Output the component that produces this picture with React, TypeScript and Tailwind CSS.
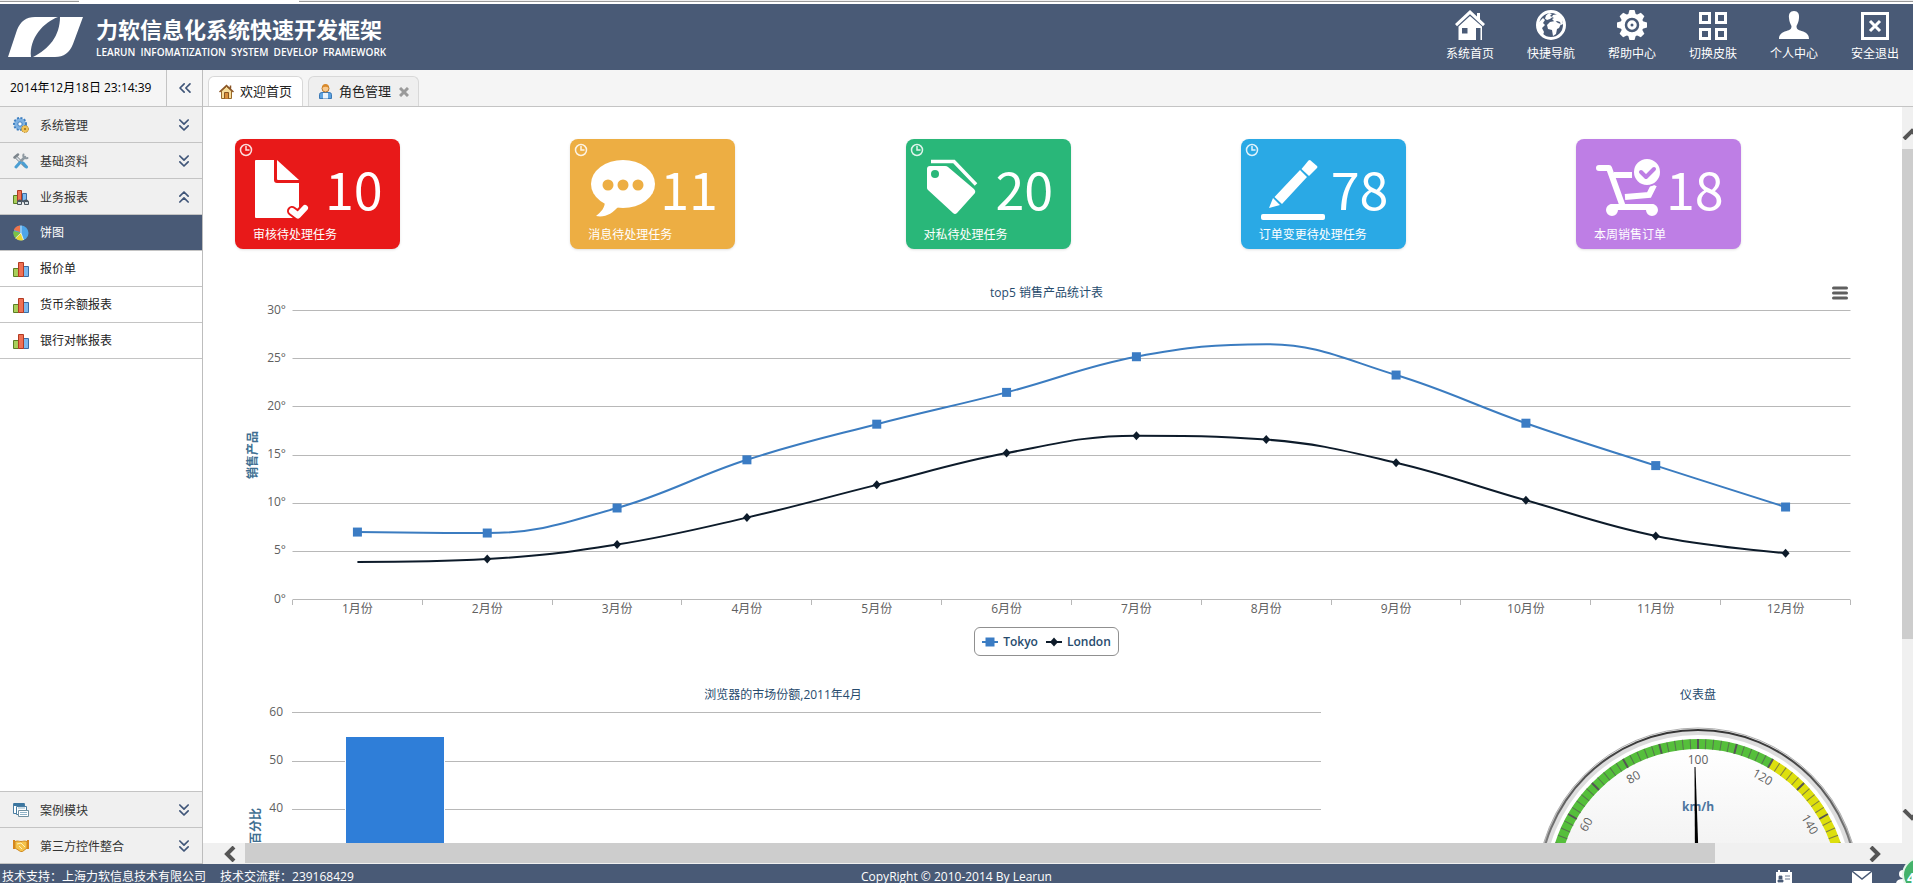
import type { ReactNode } from "react"
import { ChevronsDown, ChevronsLeft, ChevronsUp } from "lucide-react"

const months = ["1月份", "2月份", "3月份", "4月份", "5月份", "6月份", "7月份", "8月份", "9月份", "10月份", "11月份", "12月份"]
const tokyo = [7.0, 6.9, 9.5, 14.5, 18.2, 21.5, 25.2, 26.5, 23.3, 18.3, 13.9, 9.6]
const london = [3.9, 4.2, 5.7, 8.5, 11.9, 15.2, 17.0, 16.6, 14.2, 10.3, 6.6, 4.8]

/* ---------- header icons ---------- */

const HomeIcon = () => (
  <svg viewBox="0 0 30 30" className="size-[30px]" fill="#fff">
    <path d="M15 0 0 14l2 2.2L15 4.2l13 12 2-2.2-5-4.7V3h-3v3.500z" />
    <path d="M15 6 3.500 16.500V30H21V18h4.500v12H27V16.500z" />
    <path d="M7 18h5.500v5.500H7z" fill="#495a76" />
  </svg>
)

const GlobeIcon = () => (
  <svg viewBox="0 0 30 30" className="size-[30px]">
    <circle cx="15" cy="15" r="13.500" fill="#495a76" stroke="#fff" strokeWidth="3" />
    <path d="M10 5.500 13 3l3 1-2 2 2.500 1L14 9l-3 1-2-1.500zM17 5l5-1 4 4 1 6-2 1-1-3-3-1-2 1-3-3 2-1-2-1zM14 12l5-1 3 2 3 1-2 4-2 1-1 5-3 2-1-6-4-1-1-4zM3 12l4-4 2 2-2 3 2 2-3 3 2 4-1 3-4-5z" fill="#fff" />
  </svg>
)

const GearIcon = () => (
  <svg viewBox="0 0 30 30" className="size-[30px]">
    <g fill="#fff">
      {[0, 45, 90, 135, 180, 225, 270, 315].map((a) => (
        <path key={a} d="M12.500 0h5l1.500 5h-8z" transform={`rotate(${a} 15 15)`} />
      ))}
      <circle cx="15" cy="15" r="11.500" />
    </g>
    <circle cx="15" cy="15" r="6" fill="none" stroke="#495a76" strokeWidth="2.500" />
    <circle cx="15" cy="15" r="1.500" fill="#495a76" />
  </svg>
)

const SkinIcon = () => (
  <svg viewBox="0 0 30 30" className="size-[30px]" fill="none" stroke="#fff" strokeWidth="3">
    <path d="M2.500 3.500h9v9h-9zM18.500 3.500h9v9h-9zM2.500 19.500h9v9h-9zM18.500 19.500h9v9h-9z" />
  </svg>
)

const UserIcon = () => (
  <svg viewBox="0 0 30 30" className="size-[30px]" fill="#fff">
    <path d="M15 1c4 0 5.500 3 5 7-.3 4-1.500 6-2.500 8 0 3 1.500 4 5 5 5 1.500 7.500 3.500 7.500 8H0c0-4.500 2.500-6.500 7.500-8 3.500-1 5-2 5-5-1-2-2.200-4-2.500-8-.5-4 1-7 5-7z" />
  </svg>
)

const ExitIcon = () => (
  <svg viewBox="0 0 30 30" className="size-[30px]" fill="none" stroke="#fff" strokeWidth="3">
    <path d="M2.500 3.500h25v25h-25z" />
    <path d="m10 11 10 10M20 11 10 21" />
  </svg>
)

/* ---------- sidebar icons ---------- */

const SettingIcon = () => (
  <svg viewBox="0 0 16 16" className="size-4">
    <circle cx="7" cy="7" r="6" fill="#8ab9e6" stroke="#3f7fc0" strokeWidth="2" strokeDasharray="2 1.500" />
    <circle cx="7" cy="7" r="5" fill="#7fb2e2" />
    <circle cx="7" cy="7" r="2.200" fill="#fff" stroke="#3f7fc0" />
    <circle cx="12" cy="12" r="3.500" fill="#f0c35a" stroke="#b98a2b" strokeDasharray="1.500 1" />
    <circle cx="12" cy="12" r="1" fill="#9a6d14" />
  </svg>
)

const ToolIcon = () => (
  <svg viewBox="0 0 16 16" className="size-4" fill="none" strokeLinecap="round">
    <path d="M3 4l9 9" stroke="#7c858c" strokeWidth="3" />
    <path d="M3 4l6 6" stroke="#dfe6ea" strokeWidth="1.500" />
    <path d="M1.500 4.500 5 1.500" stroke="#7c858c" strokeWidth="2.500" />
    <path d="M12 4 7.500 8.500" stroke="#8f9aa2" strokeWidth="2.500" />
    <path d="M10.500 1.500c-1 2 .5 4.500 4 3.500" stroke="#8f9aa2" strokeWidth="2" />
    <path d="M7 9.500 3 14M10 10l3.500 4" stroke="#4b9fd3" strokeWidth="3" />
  </svg>
)

const BarsIcon = () => (
  <svg viewBox="0 0 16 16" className="size-4">
    <path d="M.5 7.500h5v8h-5z" fill="#a9cf5a" stroke="#5c7f25" />
    <path d="M10.500 5.500h5v10h-5z" fill="#7db9ee" stroke="#3a6ea5" />
    <path d="M5.500 1.500h5v14h-5z" fill="#ef7154" stroke="#b23a22" />
  </svg>
)

const ReportIcon = () => (
  <svg viewBox="0 0 16 16" className="size-4">
    <path d="M.5 6.500h4v8h-4z" fill="#a9cf5a" stroke="#5c7f25" />
    <path d="M9.500 4.500h4v8h-4z" fill="#7db9ee" stroke="#3a6ea5" />
    <path d="M4.500 1.500h4v11h-4z" fill="#ef7154" stroke="#b23a22" />
    <path d="M5 13.500c0-3 3.500-3 3.500 0M11 13.500c0-3 4-3 4 0M8 12h3" fill="none" stroke="#4b5660" strokeWidth="1.500" />
    <path d="M4.500 12.500h4v3h-4zM11.500 12.500h4v3h-4z" fill="#d5dde3" stroke="#4b5660" />
  </svg>
)

const PieIcon = () => (
  <svg viewBox="0 0 16 16" className="size-4">
    <circle cx="8" cy="8" r="7.500" fill="#4ea5e8" />
    <path d="M8 8 2.500 13.200A7.500 7.500 0 0 0 10.500 15z" fill="#e8d632" />
    <path d="M8 8 2.500 13.200A7.500 7.500 0 0 1 .7 6z" fill="#7cc243" />
    <path d="M7 7 .8 5A7.500 7.500 0 0 1 7 .5z" fill="#f0744a" />
    <path d="M8 .5V8l2.500 7M8 8 2.500 13.200" fill="none" stroke="#fff" strokeOpacity=".7" />
  </svg>
)

const CaseIcon = () => (
  <svg viewBox="0 0 16 16" className="size-4" fill="#fff">
    <path d="M.5 1.500h11v10H.5z" stroke="#4a7ea3" />
    <path d="M1 1h10v3H1z" fill="#3b76a0" />
    <path d="M3.500 4.500h10v8h-10z" stroke="#4a7ea3" />
    <path d="M5.500 8.500h10v6h-10z" stroke="#6f8f9f" />
    <path d="M5 6h7M7 10.500h7M7 12.500h7" stroke="#8fb3c8" />
  </svg>
)

const HandIcon = () => (
  <svg viewBox="0 0 16 16" className="size-4">
    <path d="M0 2h2v9H0zM14 2h2v9h-2z" fill="#d8861c" />
    <path d="M2 3.500c3-1 4 0 6 0s3-1 6 0V10l-4.500 3.500h-2L2 10z" fill="#f5c24a" stroke="#cf8a22" />
    <path d="m4 6 4-1 4 4M6 8l3 3" fill="none" stroke="#fff0b8" />
  </svg>
)

/* ---------- task card drawings ---------- */

const DocArt = () => (
  <g fill="#fff">
    <path d="M21 21h18v20q0 3 3 3h22v34q0 1-1 1H21q-1 0-1-1V22q0-1 1-1z" />
    <path d="m42 21 22 20H43q-1 0-1-1z" />
    <path d="m57 72 6 4.500 7-7.500" fill="none" stroke="#e81919" strokeWidth="10" strokeLinecap="round" strokeLinejoin="round" />
    <path d="m57 72 6 4.500 7-7.500" fill="none" stroke="#fff" strokeWidth="6" strokeLinecap="round" strokeLinejoin="round" />
  </g>
)

const ChatArt = () => (
  <g fill="#fff">
    <ellipse cx="53" cy="45" rx="32" ry="24" />
    <path d="M35 62c0 7-4 11-9 15 9 2 17-3 22-9z" />
    <g fill="#edae43">
      <circle cx="38" cy="46" r="5.500" />
      <circle cx="53" cy="46" r="5.500" />
      <circle cx="68" cy="46" r="5.500" />
    </g>
  </g>
)

const TagArt = () => (
  <g fill="#fff">
    <path d="M24 27h15q2 0 3 1l26 22q2 2 1 4L51 74q-2 2-4 0L22 51q-1-1-1-2V30q0-3 3-3z" />
    <circle cx="29" cy="35" r="4" fill="#29b779" />
    <path d="M25 22.500h23l22 23" fill="none" stroke="#fff" strokeWidth="3.500" />
  </g>
)

const PencilArt = () => (
  <g fill="#fff">
    <rect x="20" y="75" width="64" height="6" rx="2" />
    <path d="m69 21 7 6q1 1 0 2l-8 8-7.500-7 7-8.500q.5-.5 1.500-.5z" />
    <path d="m59 31 7 7-25 27-7.500-7zM32 59l7 7-11 3z" />
  </g>
)

const CartArt = () => (
  <g fill="none" stroke="#fff" strokeWidth="6" strokeLinecap="round" strokeLinejoin="round">
    <path d="M23 29h10l14 39" />
    <path d="M38 36h18M49 58l24-2 5-10" strokeLinecap="butt" strokeLinejoin="miter" />
    <path d="M36 68h40" />
    <circle cx="36" cy="71" r="3" />
    <circle cx="76" cy="71" r="3" />
    <circle cx="71" cy="33" r="14" fill="#fff" stroke="#be7ee5" strokeWidth="2" />
    <path d="m65 33 5 5 8-8" stroke="#be7ee5" strokeWidth="4" />
  </g>
)

type Task = { label: string; count: number; color: string; art: ReactNode }

const tasks: Task[] = [
  { label: "审核待处理任务", count: 10, color: "bg-[#e81919]", art: <DocArt /> },
  { label: "消息待处理任务", count: 11, color: "bg-[#edae43]", art: <ChatArt /> },
  { label: "对私待处理任务", count: 20, color: "bg-[#29b779]", art: <TagArt /> },
  { label: "订单变更待处理任务", count: 78, color: "bg-[#2aa9e5]", art: <PencilArt /> },
  { label: "本周销售订单", count: 18, color: "bg-[#be7ee5]", art: <CartArt /> },
]

const TaskCard = ({ label, count, color, art }: Task) => (
  <a href="#" className={`block h-[110px] w-[165px] rounded-lg text-white shadow-sm ${color}`}>
    <div className="flex h-[86px]">
      <svg viewBox="0 0 90 86" className="h-[86px] w-[90px] shrink-0">
        {label !== "本周销售订单" && (
          <g fill="none" stroke="#fff" strokeOpacity=".85" strokeWidth="1.500">
            <circle cx="11" cy="11" r="5.500" />
            <path d="M11 7v4h3.500" />
          </g>
        )}
        {art}
      </svg>
      <span className="pt-3 font-['Noto_Sans_CJK_SC',sans-serif] text-[52px] leading-[74px]">{count}</span>
    </div>
    <div className="pl-[18px] text-xs leading-[20px]">{label}</div>
  </a>
)

/* ---------- header / sidebar / tabs ---------- */

const navItems = [
  { label: "系统首页", icon: <HomeIcon /> },
  { label: "快捷导航", icon: <GlobeIcon /> },
  { label: "帮助中心", icon: <GearIcon /> },
  { label: "切换皮肤", icon: <SkinIcon /> },
  { label: "个人中心", icon: <UserIcon /> },
  { label: "安全退出", icon: <ExitIcon /> },
]

const Header = () => (
  <header className="flex h-[66px] shrink-0 justify-between bg-[#495a76] text-white">
    <div className="flex pl-2">
      <svg viewBox="0 0 75 42" className="mt-3 h-[42px] w-[75px]" fill="#fff">
        <path d="M0 41 9 14Q14 1 27 1h23C36 6 21 22 23 41z" />
        <path d="M75 1 65 28Q60 41 47 41H25C41 33 52 20 52 1z" />
      </svg>
      <div className="pt-[10px] pl-[13px]">
        <h1 className="text-[22px] leading-[30px] font-bold">力软信息化系统快速开发框架</h1>
        <p className="text-[10px] leading-4 font-semibold whitespace-pre">LEARUN  INFOMATIZATION  SYSTEM  DEVELOP  FRAMEWORK</p>
      </div>
    </div>
    <nav className="flex gap-[33px] pt-[6px] pr-[14px]">
      {navItems.map(({ label, icon }) => (
        <a key={label} href="#" className="flex w-12 flex-col items-center gap-[5px] text-xs leading-[18px] whitespace-nowrap">
          {icon}
          {label}
        </a>
      ))}
    </nav>
  </header>
)

type MenuProps = { label: string; icon: ReactNode; open?: boolean }

const MenuHead = ({ label, icon, open }: MenuProps) => (
  <button className="flex h-9 w-full items-center border-b border-[#c4c4c4] bg-[#f0f0f0] pr-2 pl-[13px] text-xs text-[#333]">
    {icon}
    <span className="flex-1 pt-[2px] pl-[11px] text-left">{label}</span>
    {open ? (
      <ChevronsUp className="size-5 text-[#3f5578]" strokeWidth={2} />
    ) : (
      <ChevronsDown className="size-5 text-[#3f5578]" strokeWidth={2} />
    )}
  </button>
)

const subItems = [
  { label: "饼图", icon: <PieIcon />, active: true },
  { label: "报价单", icon: <BarsIcon />, active: false },
  { label: "货币余额报表", icon: <BarsIcon />, active: false },
  { label: "银行对帐报表", icon: <BarsIcon />, active: false },
]

const Sidebar = () => (
  <aside className="flex w-[203px] shrink-0 flex-col border-r border-[#bdbdbd] bg-white">
    <div className="flex h-[37px] shrink-0 border-b border-[#c4c4c4] bg-[#f5f5f5]">
      <time className="w-[167px] border-r border-[#c4c4c4] pl-[10px] text-xs leading-9 text-black">2014年12月18日 23:14:39</time>
      <button aria-label="收起" className="flex flex-1 items-center justify-center">
        <ChevronsLeft className="size-5 text-[#3f5578]" strokeWidth={2} />
      </button>
    </div>
    <MenuHead label="系统管理" icon={<SettingIcon />} />
    <MenuHead label="基础资料" icon={<ToolIcon />} />
    <MenuHead label="业务报表" icon={<ReportIcon />} open />
    <ul className="flex-1">
      {subItems.map(({ label, icon, active }) => (
        <li key={label}>
          <a
            href="#"
            className={`flex h-9 items-center gap-[11px] border-b border-[#c4c4c4] pl-[13px] text-xs ${active ? "bg-[#495a76] text-white" : "bg-white text-[#222]"}`}
          >
            {icon}
            {label}
          </a>
        </li>
      ))}
    </ul>
    <div className="border-t border-[#c4c4c4]">
      <MenuHead label="案例模块" icon={<CaseIcon />} />
      <MenuHead label="第三方控件整合" icon={<HandIcon />} />
    </div>
  </aside>
)

const Tabs = () => (
  <div className="flex h-[37px] shrink-0 items-end gap-[5px] border-b border-[#c4c4c4] bg-[#f5f5f5] pl-[5px] text-[13px] text-[#222]">
    <button className="flex h-[30px] items-center gap-[6px] rounded-t-md border border-b-0 border-[#d8d8d8] bg-white px-[10px]">
      <svg viewBox="0 0 15 15" className="size-[15px]">
        <path d="M2.500 7v7.500h10V7L7.500 2.500z" fill="#f7dd9a" stroke="#9a6a2a" />
        <path d="M.5 8 7.500 1.500l7 6.500M11.500 4.500v-3" fill="none" stroke="#8a5424" strokeWidth="1.500" />
        <path d="M5.500 14.500v-6h4v6" fill="#d9903c" stroke="#8a5420" />
      </svg>
      欢迎首页
    </button>
    <div className="flex h-[30px] items-center gap-2 rounded-t-md border border-b-0 border-[#d8d8d8] bg-[#efefef] px-[9px]">
      <button className="flex items-center gap-[6px]">
        <svg viewBox="0 0 15 15" className="size-[15px]">
          <path d="M1.500 14.500v-4q0-2 2.500-2h7q2.500 0 2.500 2v4z" fill="#5da3e0" stroke="#3b78b5" />
          <path d="M5 9h5v5.500H5z" fill="#e9f3fb" />
          <circle cx="7.500" cy="4.500" r="3.500" fill="#f9c98c" stroke="#b5762d" />
          <path d="M4 4q0-4 3.500-4T11 4Q7.500 1.500 4 4z" fill="#d98a2c" />
        </svg>
        角色管理
      </button>
      <button aria-label="关闭">
        <svg viewBox="0 0 10 10" className="size-[10px]">
          <path d="m1 1 8 8M9 1 1 9" stroke="#9a9a9a" strokeWidth="3" />
        </svg>
      </button>
    </div>
  </div>
)

/* ---------- charts ---------- */

const PLOT_X = 89.5
const STEP = 129.833
const px = (i: number) => PLOT_X + (i + 0.5) * STEP
const py = (v: number) => 294.5 - (v * 289) / 30

// smoothed line whose control points never overshoot their neighbours
const spline = (values: number[]) => {
  const pts = values.map((v, i) => [px(i), py(v)])
  let d = `M${pts[0][0]} ${pts[0][1]}`
  let prev = pts[0]
  for (let i = 1; i < pts.length; i++) {
    const [x, y] = pts[i]
    const last = pts[i - 1]
    const next = pts[i + 1]
    let left = [x, y]
    let right = [x, y]
    if (next) {
      const lx = (1.5 * x + last[0]) / 2.5
      const rx = (1.5 * x + next[0]) / 2.5
      let ly = (1.5 * y + last[1]) / 2.5
      let ry = (1.5 * y + next[1]) / 2.5
      const fix = ((ry - ly) * (rx - x)) / (rx - lx) + y - ry
      ly += fix
      ry += fix
      if (ly > last[1] && ly > y) {
        ly = Math.max(last[1], y)
        ry = 2 * y - ly
      } else if (ly < last[1] && ly < y) {
        ly = Math.min(last[1], y)
        ry = 2 * y - ly
      }
      if (ry > next[1] && ry > y) {
        ry = Math.max(next[1], y)
        ly = 2 * y - ry
      } else if (ry < next[1] && ry < y) {
        ry = Math.min(next[1], y)
        ly = 2 * y - ry
      }
      left = [lx, ly]
      right = [rx, ry]
    }
    d += `C${prev[0]} ${prev[1]} ${left[0]} ${left[1]} ${x} ${y}`
    prev = right
  }
  return d
}

const SalesChart = () => (
  <section>
    <div className="grid h-6 grid-cols-[1fr_auto_1fr] items-center pr-11 pl-8">
      <h2 className="col-start-2 text-xs text-[#274b6d]">top5 销售产品统计表</h2>
      <button aria-label="菜单" className="w-[26px] justify-self-end">
        <svg viewBox="0 0 16 14" className="h-[14px] w-4" stroke="#5f5f5f" strokeWidth="3" strokeLinecap="round">
          <path d="M1.500 2h13M1.500 7h13M1.500 12h13" />
        </svg>
      </button>
    </div>
    <svg viewBox="0 0 1699 315" className="block h-auto w-full overflow-visible text-xs" fill="#606060">
      {[0, 5, 10, 15, 20, 25, 30].map((v) => (
        <g key={v}>
          <path d={`M${PLOT_X} ${Math.floor(py(v)) + 0.5}h1558`} stroke="#b8b8b8" />
          <text x="83" y={py(v) + 3} textAnchor="end">{v}°</text>
        </g>
      ))}
      {Array.from({ length: 13 }, (_, i) => (
        <path key={i} d={`M${Math.floor(PLOT_X + i * STEP) + 0.5} 295v5`} stroke="#b8b8b8" />
      ))}
      <text transform="translate(54 150) rotate(-90)" textAnchor="middle" fontWeight="bold" fill="#3f6f92">销售产品</text>
      {months.map((m, i) => (
        <text key={m} x={px(i)} y="308" textAnchor="middle">{m}</text>
      ))}
      <path d={spline(tokyo)} fill="none" stroke="#3b7cc0" strokeWidth="2" />
      <path d={spline(london)} fill="none" stroke="#0d1b2a" strokeWidth="2" />
      {tokyo.map((v, i) => i !== 7 && <rect key={i} x={px(i) - 4.5} y={py(v) - 4.5} width="9" height="9" fill="#3b7cc4" />)}
      {london.map((v, i) => i !== 0 && <path key={i} d={`M${px(i)} ${py(v) - 4.5}l4 4.500-4 4.500-4-4.500z`} fill="#0d1b2a" />)}
    </svg>
    <div className="mt-[7px] flex justify-center pr-11 pl-8">
      <div className="flex h-[29px] items-center gap-2 rounded-md border border-[#909090] px-[7px] text-xs font-semibold text-[#274b6d]">
        <button className="flex items-center gap-[5px]">
          <svg viewBox="0 0 16 10" className="h-[10px] w-4">
            <path d="M0 5h16" stroke="#3b7cc0" strokeWidth="2" />
            <path d="M3.500.5h9v9h-9z" fill="#3b7cc4" />
          </svg>
          Tokyo
        </button>
        <button className="flex items-center gap-[5px]">
          <svg viewBox="0 0 16 10" className="h-[10px] w-4" fill="#0d1b2a">
            <path d="M0 5h16" stroke="#0d1b2a" strokeWidth="2" />
            <path d="m8 .5 4 4.500-4 4.500L4 5z" />
          </svg>
          London
        </button>
      </div>
    </div>
  </section>
)

const ShareChart = () => (
  <svg viewBox="0 0 1148 163" className="block h-auto min-w-0 flex-[1148] text-xs" fill="#606060">
    <text x="580" y="19" textAnchor="middle" fill="#274b6d">浏览器的市场份额,2011年4月</text>
    {[60, 50, 40].map((v, i) => (
      <g key={v}>
        <path d={`M89 ${[32.5, 81.5, 129.5][i]}h1029`} stroke="#b8b8b8" />
        <text x="80" y={36 + i * 48} textAnchor="end">{v}</text>
      </g>
    ))}
    <path d="M142 163V56h100v107z" fill="#fff" />
    <path d="M143 163V57h98v106z" fill="#2f7ed8" />
    <text transform="translate(57 128) rotate(-90)" textAnchor="end" fontWeight="bold" fill="#3f6f92">百分比</text>
  </svg>
)

// 100 sits at the top of the dial, 1.5 degrees for each unit
const Gauge = () => (
  <svg viewBox="0 0 551 163" className="block h-auto min-w-0 flex-[551] text-xs" fill="#606060">
    <defs>
      <linearGradient id="rim" x1="0" y1="0" x2="0" y2="1">
        <stop offset="0" stopColor="#fff" />
        <stop offset="1" stopColor="#333" />
      </linearGradient>
      <linearGradient id="ring" x1="0" y1="0" x2="0" y2="1">
        <stop offset="0" stopColor="#333" />
        <stop offset="1" stopColor="#fff" />
      </linearGradient>
      <linearGradient id="plate" x1="0" y1="0" x2="0" y2="1">
        <stop offset="0" stopColor="#fff" />
        <stop offset="1" stopColor="#ddd" />
      </linearGradient>
    </defs>
    <text x="347" y="19" textAnchor="middle" fill="#274b6d">仪表盘</text>
    <g transform="translate(347 209)">
      <circle r="161" fill="url(#rim)" stroke="#b0b0b0" />
      <circle r="160" fill="url(#ring)" />
      <circle r="158" fill="#ddd" />
      <circle r="154" fill="#fff" />
      <circle r="141" fill="url(#plate)" />
      <path d="M-125.570 72.500A145 145 0 0 1 72.500 -125.570" fill="none" stroke="#55bf3b" strokeWidth="10" />
      <path d="M72.500 -125.570A145 145 0 0 1 145 0" fill="none" stroke="#dddf0d" strokeWidth="10" />
      {Array.from({ length: 61 }, (_, i) => (
        <path key={i} d="M0-150v10" transform={`rotate(${i * 3 - 90})`} stroke="#555" strokeOpacity={i % 5 ? 0.7 : 1} strokeWidth={i % 5 ? 1 : 2} />
      ))}
      {[60, 80, 100, 120, 140].map((v) => (
        <text key={v} y="-125" textAnchor="middle" transform={`rotate(${(v - 100) * 1.5})`}>{v}</text>
      ))}
      <text y="-78" textAnchor="middle" fontWeight="bold" fill="#4d759e">km/h</text>
      <path d="M-3.500-122h1L1-20h-4z" fill="#000" />
    </g>
  </svg>
)

/* ---------- scroll bars ---------- */

const VerticalBar = () => (
  <div className="flex w-[11px] shrink-0 flex-col overflow-hidden bg-[#f0f0f0]">
    <button aria-label="向上" className="flex h-[42px] shrink-0 items-center pt-3">
      <svg viewBox="0 0 20 12" className="h-3 w-5 shrink-0" fill="none" stroke="#555" strokeWidth="4">
        <path d="m2 11 8-8 8 8" />
      </svg>
    </button>
    <div className="h-[490px] bg-[#cdcdcd]" />
    <button aria-label="向下" className="mt-auto flex h-[42px] shrink-0 items-start">
      <svg viewBox="0 0 20 12" className="mt-2 h-3 w-5 shrink-0" fill="none" stroke="#555" strokeWidth="4">
        <path d="m2 1 8 8 8-8" />
      </svg>
    </button>
  </div>
)

const HorizontalBar = () => (
  <div className="flex h-[21px] shrink-0 bg-[#f0f0f0] pr-[11px]">
    <button aria-label="向左" className="flex w-[42px] shrink-0 items-center justify-center pl-3">
      <svg viewBox="0 0 12 16" className="h-4 w-3" fill="none" stroke="#555" strokeWidth="4">
        <path d="m10 1-7 7 7 7" />
      </svg>
    </button>
    <div className="flex-1">
      <div className="h-5 w-[91%] bg-[#cdcdcd]" />
    </div>
    <button aria-label="向右" className="flex w-[42px] shrink-0 items-center justify-center pr-3">
      <svg viewBox="0 0 12 16" className="h-4 w-3" fill="none" stroke="#555" strokeWidth="4">
        <path d="m2 1 7 7-7 7" />
      </svg>
    </button>
  </div>
)

const Footer = () => (
  <footer className="relative grid h-[19px] shrink-0 grid-cols-3 bg-[#495a76] text-xs leading-[26px] text-white">
    <div className="flex gap-[14px] overflow-hidden pl-[2px]">
      <span>技术支持：上海力软信息技术有限公司</span>
      <span>技术交流群：239168429</span>
    </div>
    <div className="overflow-hidden text-center">CopyRight © 2010-2014 By Learun</div>
    <div className="flex justify-end overflow-hidden pt-[6px]">
      <svg viewBox="0 0 16 14" className="mr-[60px] h-[14px] w-4">
        <path d="M0 2h2V0h2v2h8V0h2v2h2v12H0z" fill="#fff" />
        <path d="M3 6h3v3H3zM2 10h5v2H2zM9 6h5M9 9h5" fill="#495a76" stroke="#495a76" strokeWidth=".8" />
      </svg>
      <svg viewBox="0 0 20 14" className="mr-6 h-[14px] w-5">
        <path d="M0 1h20v13H0z" fill="#fff" />
        <path d="m0 1 10 8 10-8" fill="none" stroke="#495a76" strokeWidth="1.500" />
      </svg>
      <svg viewBox="0 0 17 14" className="h-[14px] w-[17px]" fill="#fff">
        <circle cx="7" cy="4" r="4" />
        <path d="M0 14q0-5 7-5t7 5z" />
      </svg>
    </div>
    <div className="absolute right-0 bottom-0 h-[26px] w-[11px] overflow-hidden">
      <div className="h-9 w-9 rounded-full border-2 border-[#e6f5ea] bg-[#45b36b] pl-[3px] text-sm leading-[38px] font-bold text-white">4</div>
    </div>
  </footer>
)

const App = () => {
  return (
    <div className="flex h-screen flex-col overflow-hidden bg-white font-['Open_Sans','Noto_Sans_CJK_SC',sans-serif]">
      <div className="flex h-1 shrink-0 bg-white">
        <div className="h-[2px] w-[79px] border-b border-[#999] bg-[#eee]" />
        <div className="w-[220px]" />
        <div className="h-[2px] flex-1 border-b border-[#999] bg-[#eee]" />
      </div>
      <Header />
      <div className="flex min-h-0 flex-1">
        <Sidebar />
        <div className="flex min-w-0 flex-1 flex-col">
          <Tabs />
          <div className="flex min-h-0 flex-1">
            <main className="min-w-0 flex-1 overflow-hidden pt-8">
              <div className="mb-8 flex justify-between pr-[161px] pl-8">
                {tasks.map((task) => (
                  <TaskCard key={task.label} {...task} />
                ))}
              </div>
              <SalesChart />
              <div className="mt-6 flex items-start">
                <ShareChart />
                <Gauge />
              </div>
            </main>
            <VerticalBar />
          </div>
          <HorizontalBar />
        </div>
      </div>
      <Footer />
    </div>
  )
}

export default App
